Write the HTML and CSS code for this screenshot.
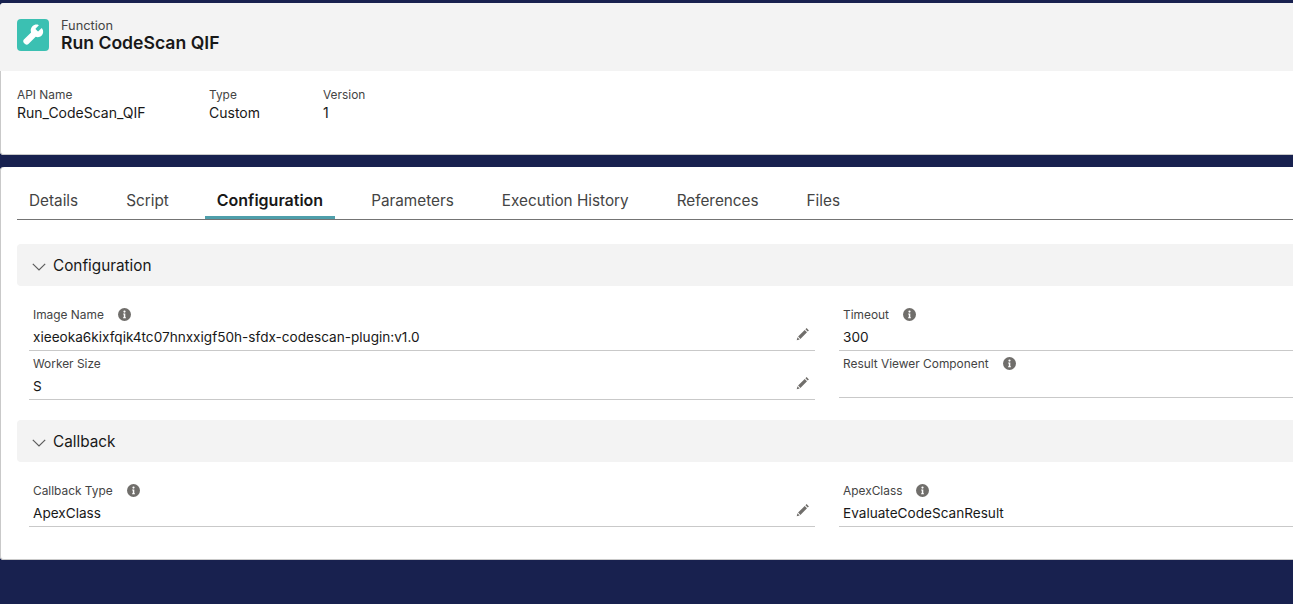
FILE: index.html
```html
<!DOCTYPE html>
<html lang="en">
<head>
<meta charset="utf-8">
<title>Run CodeScan QIF</title>
<link rel="stylesheet" href="styles.css">
</head>
<body>
<svg class="defs" width="0" height="0" aria-hidden="true">
  <symbol id="info" viewBox="0 0 13 13">
    <circle cx="6.5" cy="6.500" r="6.500" fill="#706e6b"/>
    <circle cx="6.5" cy="3.600" r="1.100" fill="#fff"/>
    <path d="M5.200 5.600h2.100v3.700h.6v1h-2.800v-1h.7V6.600h-.6z" fill="#fff"/>
  </symbol>
  <symbol id="pencil" viewBox="0 0 14 14">
    <path d="M10.600 1.100l2.300 2.300-1.200 1.200-2.300-2.300zM8.700 3l2.300 2.300-6.600 6.600-2.300-2.300zM1.500 10.300l2.200 2.200-3 .8z" fill="#706e6b"/>
  </symbol>
  <symbol id="chevron" viewBox="0 0 14 8">
    <path d="M.8.8L7 7l6.200-6.200" fill="none" stroke="#5c5c5c" stroke-width="1.200"/>
  </symbol>
</svg>

<div class="page">
  <section class="card highlights">
    <header class="highlights-head">
      <div class="object-icon">
        <svg width="24" height="24" viewBox="0 0 24 24"><path d="M21.100 5.500c-.1-.3-.5-.4-.7-.2l-3 3c-.2.2-.5.2-.7 0l-2-2c-.2-.2-.2-.5 0-.7l3-3c.2-.2.1-.6-.2-.7-2.100-.7-4.500-.2-6.100 1.400-1.700 1.700-2.100 4.100-1.300 6.100L2.900 16.600c-.9.9-.9 2.400 0 3.300l1.200 1.200c.9.9 2.400.9 3.300 0l7.300-7.300c2 .8 4.400.4 6-1.300 1.700-1.700 2.100-4.800.4-7z" fill="#fff"/></svg>
      </div>
      <div class="head-text">
        <div class="eyebrow">Function</div>
        <h1 class="title">Run CodeScan QIF</h1>
      </div>
    </header>
    <div class="meta">
      <div class="meta-item meta-api"><div class="meta-label">API Name</div><div class="meta-value">Run_CodeScan_QIF</div></div>
      <div class="meta-item meta-type"><div class="meta-label">Type</div><div class="meta-value">Custom</div></div>
      <div class="meta-item"><div class="meta-label">Version</div><div class="meta-value">1</div></div>
    </div>
  </section>

  <section class="card detail">
    <nav class="tabs">
      <a class="tab">Details</a>
      <a class="tab">Script</a>
      <a class="tab active">Configuration</a>
      <a class="tab">Parameters</a>
      <a class="tab">Execution History</a>
      <a class="tab">References</a>
      <a class="tab">Files</a>
    </nav>

    <h2 class="section-head"><svg class="chev" width="14" height="8"><use href="#chevron"/></svg>Configuration</h2>
    <div class="form-grid">
      <div class="field">
        <div class="field-label">Image Name<svg class="info" width="13" height="13"><use href="#info"/></svg></div>
        <div class="field-value">xieeoka6kixfqik4tc07hnxxigf50h-sfdx-codescan-plugin:v1.0<svg class="edit" width="14" height="14"><use href="#pencil"/></svg></div>
      </div>
      <div class="field">
        <div class="field-label">Timeout<svg class="info" width="13" height="13"><use href="#info"/></svg></div>
        <div class="field-value">300</div>
      </div>
      <div class="field">
        <div class="field-label">Worker Size</div>
        <div class="field-value">S<svg class="edit" width="14" height="14"><use href="#pencil"/></svg></div>
      </div>
      <div class="field">
        <div class="field-label">Result Viewer Component<svg class="info" width="13" height="13"><use href="#info"/></svg></div>
        <div class="field-value short"></div>
      </div>
    </div>

    <h2 class="section-head callback"><svg class="chev" width="14" height="8"><use href="#chevron"/></svg>Callback</h2>
    <div class="form-grid">
      <div class="field">
        <div class="field-label">Callback Type<svg class="info" width="13" height="13"><use href="#info"/></svg></div>
        <div class="field-value">ApexClass<svg class="edit" width="14" height="14"><use href="#pencil"/></svg></div>
      </div>
      <div class="field">
        <div class="field-label">ApexClass<svg class="info" width="13" height="13"><use href="#info"/></svg></div>
        <div class="field-value">EvaluateCodeScanResult</div>
      </div>
    </div>
  </section>
</div>
</body>
</html>
```

FILE: styles.css
```css
* { box-sizing: border-box; }
html, body { margin: 0; height: 100%; overflow: hidden; }
body {
  background: #18214f;
  font-family: Inter, "Liberation Sans", sans-serif;
  color: #181818;
}
.defs { position: absolute; }
.page { padding-top: 3px; width: 1305px; }
.card {
  background: #fff;
  border-radius: 4px;
  box-shadow: inset 1px 0 0 #c9c9c9, inset 0 -1px 0 #c9c9c9;
}
.highlights { height: 152px; overflow: hidden; }
.highlights-head {
  height: 68px;
  background: #f3f3f3;
  padding: 16px 17px 0;
  display: flex;
  gap: 12px;
}
.object-icon {
  width: 32px;
  height: 32px;
  background: #3bc0b2;
  border-radius: 4px;
  display: flex;
  align-items: center;
  justify-content: center;
}
.eyebrow { font-size: 12.8px; line-height: 14px; color: #444; }
.title { margin: 0; font-size: 17.6px; line-height: 20px; font-weight: 600; }
.meta { display: flex; padding: 16px 17px 0; }
.meta-item { font-size: 14px; }
.meta-api { width: 192px; }
.meta-type { width: 114px; }
.meta-label { font-size: 11.9px; line-height: 15px; color: #444; }
.meta-value { line-height: 22px; }

.detail { margin-top: 12px; height: 393px; padding: 0 0 0 17px; }
.tabs {
  display: flex;
  gap: 24px;
  height: 53px;
  border-bottom: 1px solid #747474;
}
.tab {
  padding: 0 12px;
  height: 52px;
  line-height: 67px;
  font-size: 15.3px;
  color: #444;
}
.tab.active {
  font-size: 16px;
  font-weight: 600;
  color: #181818;
  box-shadow: inset 0 -3px 0 #4f9fab;
}
.section-head {
  margin: 24px 0 0;
  height: 42px;
  background: #f3f3f3;
  border-radius: 4px;
  padding-left: 15px;
  display: flex;
  align-items: center;
  gap: 7px;
  font-size: 15.3px;
  font-weight: 400;
}
.chev { margin-top: 3px; }
.section-head.callback { margin-top: 20px; }
.form-grid {
  display: grid;
  grid-template-columns: 786px 1fr;
  column-gap: 24px;
  row-gap: 5px;
  padding: 21px 0 0 12px;
}
.field { padding-left: 4px; }
.field-label {
  font-size: 11.9px;
  line-height: 16px;
  color: #444;
  display: flex;
  align-items: center;
  gap: 14px;
}
.info { margin-top: -2px; }
.field-value {
  margin-left: -4px;
  padding-left: 4px;
  height: 28px;
  border-bottom: 1px solid #c9c9c9;
  font-size: 13.6px;
  line-height: 28px;
  position: relative;
}
.field-value.short { height: 26px; }
.edit { position: absolute; right: 5px; top: 4px; }
```
